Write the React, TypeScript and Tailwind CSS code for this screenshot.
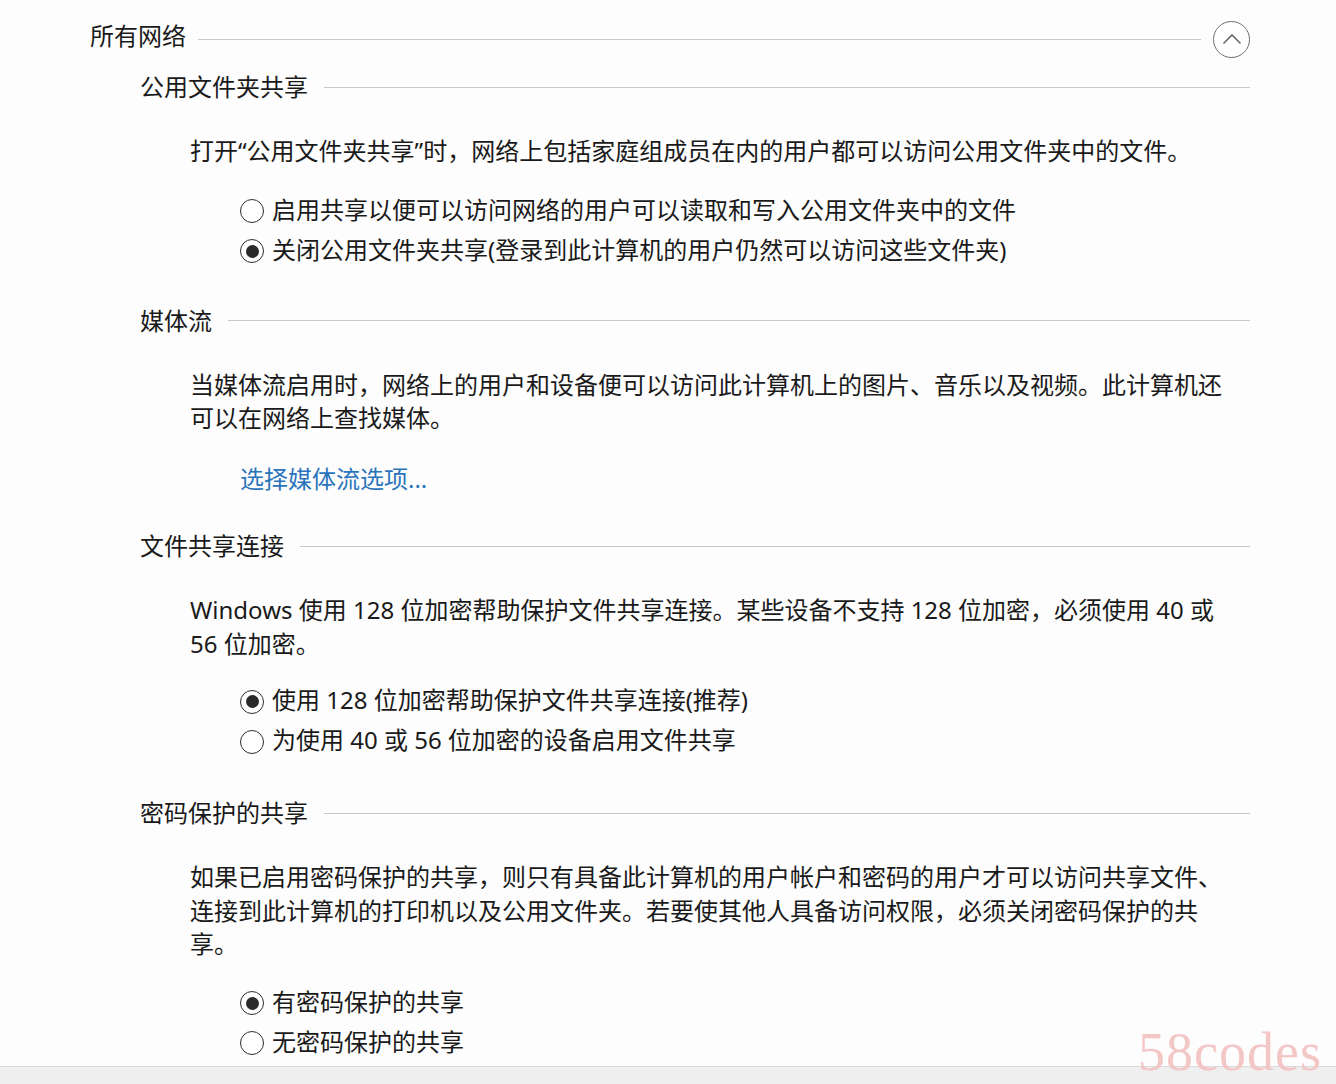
import React from "react";

const FONT = { fontFamily: '"Noto Sans", "Noto Sans CJK SC", sans-serif' };

function Radio({ checked, label }: { checked?: boolean; label: string }) {
  return (
    <div className="flex h-10 items-center">
      <span className="mr-[8px] mt-[3px] flex h-[24px] w-[24px] shrink-0 items-center justify-center rounded-full border-[1.5px] border-[#2e2e2e] bg-white">
        {checked && <span className="h-[13px] w-[13px] rounded-full bg-[#2a2a2a]" />}
      </span>
      <span className="whitespace-nowrap">{label}</span>
    </div>
  );
}

function SectionHeading({ title, mt }: { title: string; mt: string }) {
  return (
    <div className={`flex h-8 items-center ${mt}`}>
      <span className="whitespace-nowrap">{title}</span>
      <div className="ml-4 h-px flex-1 bg-[#c9c9c9]" />
    </div>
  );
}

export default function App() {
  return (
    <div
      className="relative h-[1084px] w-[1336px] overflow-hidden bg-[#fdfdfd] text-[24px] text-[#1a1a1a]"
      style={FONT}
    >
      <div className="flex h-[1066px] flex-col pl-[90px] pr-[86px] pt-[19px]">
        {/* top row */}
        <div className="flex h-10 items-center">
          <span className="-mt-[6px] whitespace-nowrap">所有网络</span>
          <div className="ml-3 h-px flex-1 bg-[#c9c9c9]" />
          <button className="ml-3 flex h-[37px] w-[37px] items-center justify-center rounded-full border-[1.5px] border-[#707070] bg-white">
            <svg width="20" height="12" viewBox="0 0 20 12" fill="none">
              <path d="M1.5 10.5 L10 2 L18.5 10.5" stroke="#6a6a6a" strokeWidth="1.6" />
            </svg>
          </button>
        </div>

        <div className="pl-[50px]">
          {/* 公用文件夹共享 */}
          <SectionHeading title="公用文件夹共享" mt="mt-[12px]" />
          <div className="mt-[31px] pl-[50px] leading-[33.5px]">
            <div className="whitespace-nowrap">打开“公用文件夹共享”时，网络上包括家庭组成员在内的用户都可以访问公用文件夹中的文件。</div>
            <div className="mt-[22px] pl-[50px]">
              <Radio label="启用共享以便可以访问网络的用户可以读取和写入公用文件夹中的文件" />
              <Radio checked label="关闭公用文件夹共享(登录到此计算机的用户仍然可以访问这些文件夹)" />
            </div>
          </div>

          {/* 媒体流 */}
          <SectionHeading title="媒体流" mt="mt-[35px]" />
          <div className="mt-[31px] pl-[50px] leading-[33.5px]">
            <div className="whitespace-nowrap">当媒体流启用时，网络上的用户和设备便可以访问此计算机上的图片、音乐以及视频。此计算机还</div>
            <div className="whitespace-nowrap">可以在网络上查找媒体。</div>
            <div className="mt-[27px] pl-[50px] text-[#2a74bc]">
              <a href="#" className="whitespace-nowrap">选择媒体流选项...</a>
            </div>
          </div>

          {/* 文件共享连接 */}
          <SectionHeading title="文件共享连接" mt="mt-[35px]" />
          <div className="mt-[31px] pl-[50px] leading-[33.5px]">
            <div className="whitespace-nowrap">Windows 使用 128 位加密帮助保护文件共享连接。某些设备不支持 128 位加密，必须使用 40 或</div>
            <div className="whitespace-nowrap">56 位加密。</div>
            <div className="mt-[20px] pl-[50px]">
              <Radio checked label="使用 128 位加密帮助保护文件共享连接(推荐)" />
              <Radio label="为使用 40 或 56 位加密的设备启用文件共享" />
            </div>
          </div>

          {/* 密码保护的共享 */}
          <SectionHeading title="密码保护的共享" mt="mt-[37px]" />
          <div className="mt-[31px] pl-[50px] leading-[33.5px]">
            <div className="whitespace-nowrap">如果已启用密码保护的共享，则只有具备此计算机的用户帐户和密码的用户才可以访问共享文件、</div>
            <div className="whitespace-nowrap">连接到此计算机的打印机以及公用文件夹。若要使其他人具备访问权限，必须关闭密码保护的共</div>
            <div className="whitespace-nowrap">享。</div>
            <div className="mt-[21px] pl-[50px]">
              <Radio checked label="有密码保护的共享" />
              <Radio label="无密码保护的共享" />
            </div>
          </div>
        </div>
      </div>

      {/* bottom bar */}
      <div className="h-[18px] w-full border-t border-[#dadada] bg-[#efefef]" />

      {/* watermark */}
      <div
        className="pointer-events-none absolute bottom-[5px] right-[14px] text-[54px] leading-none tracking-[1px] text-[#f4c2c2] opacity-90"
        style={{ fontFamily: '"Liberation Serif", "DejaVu Serif", serif' }}
      >
        58codes
      </div>
    </div>
  );
}
